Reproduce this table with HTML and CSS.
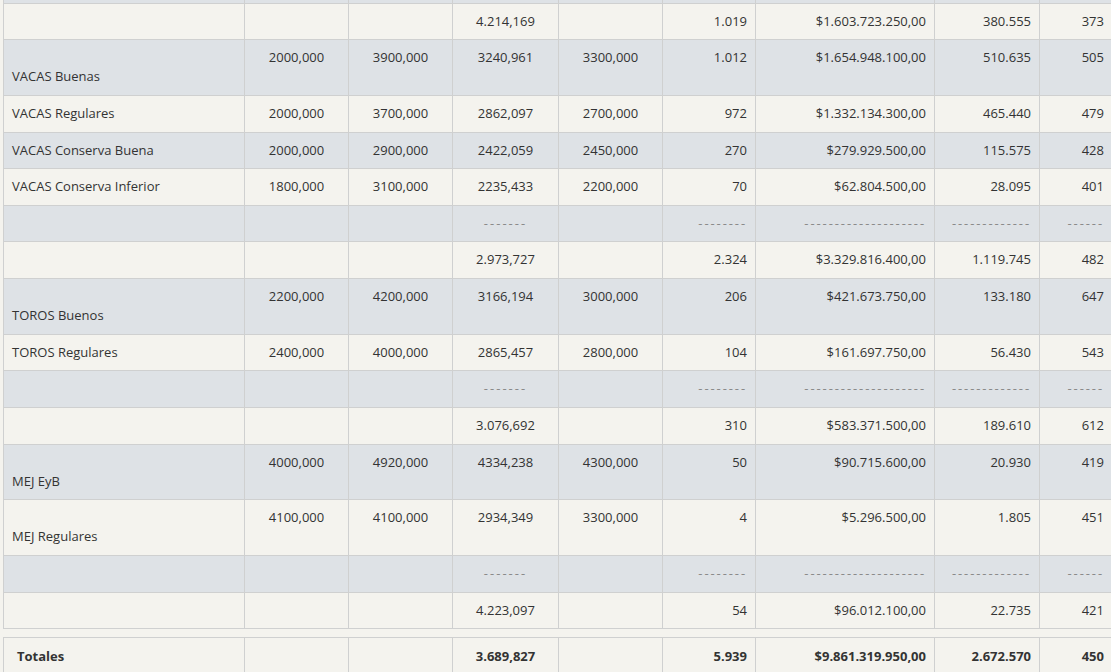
FILE: index.html
```html
<!DOCTYPE html>
<html lang="es">
<head>
<meta charset="utf-8">
<title>Totales</title>
<link rel="stylesheet" href="styles.css">
</head>
<body>
<div class="page">
  <table class="grid main">
    <colgroup>
      <col class="c1"><col class="c2"><col class="c3"><col class="c4"><col class="c5"><col class="c6"><col class="c7"><col class="c8"><col class="c9">
    </colgroup>
    <tbody>
      <tr class="alt"><td>&nbsp;</td><td></td><td></td><td></td><td></td><td></td><td></td><td></td><td></td></tr>
      <tr><td></td><td></td><td></td><td>4.214,169</td><td></td><td>1.019</td><td>$1.603.723.250,00</td><td>380.555</td><td>373</td></tr>
      <tr class="alt"><td><br>VACAS Buenas</td><td>2000,000</td><td>3900,000</td><td>3240,961</td><td>3300,000</td><td>1.012</td><td>$1.654.948.100,00</td><td>510.635</td><td>505</td></tr>
      <tr><td>VACAS Regulares</td><td>2000,000</td><td>3700,000</td><td>2862,097</td><td>2700,000</td><td>972</td><td>$1.332.134.300,00</td><td>465.440</td><td>479</td></tr>
      <tr class="alt"><td>VACAS Conserva Buena</td><td>2000,000</td><td>2900,000</td><td>2422,059</td><td>2450,000</td><td>270</td><td>$279.929.500,00</td><td>115.575</td><td>428</td></tr>
      <tr><td>VACAS Conserva Inferior</td><td>1800,000</td><td>3100,000</td><td>2235,433</td><td>2200,000</td><td>70</td><td>$62.804.500,00</td><td>28.095</td><td>401</td></tr>
      <tr class="alt sep"><td>&nbsp;</td><td></td><td></td><td>-------</td><td></td><td>--------</td><td>--------------------</td><td>-------------</td><td>------</td></tr>
      <tr><td></td><td></td><td></td><td>2.973,727</td><td></td><td>2.324</td><td>$3.329.816.400,00</td><td>1.119.745</td><td>482</td></tr>
      <tr class="alt"><td><br>TOROS Buenos</td><td>2200,000</td><td>4200,000</td><td>3166,194</td><td>3000,000</td><td>206</td><td>$421.673.750,00</td><td>133.180</td><td>647</td></tr>
      <tr><td>TOROS Regulares</td><td>2400,000</td><td>4000,000</td><td>2865,457</td><td>2800,000</td><td>104</td><td>$161.697.750,00</td><td>56.430</td><td>543</td></tr>
      <tr class="alt sep"><td>&nbsp;</td><td></td><td></td><td>-------</td><td></td><td>--------</td><td>--------------------</td><td>-------------</td><td>------</td></tr>
      <tr><td></td><td></td><td></td><td>3.076,692</td><td></td><td>310</td><td>$583.371.500,00</td><td>189.610</td><td>612</td></tr>
      <tr class="alt"><td><br>MEJ EyB</td><td>4000,000</td><td>4920,000</td><td>4334,238</td><td>4300,000</td><td>50</td><td>$90.715.600,00</td><td>20.930</td><td>419</td></tr>
      <tr><td><br>MEJ Regulares</td><td>4100,000</td><td>4100,000</td><td>2934,349</td><td>3300,000</td><td>4</td><td>$5.296.500,00</td><td>1.805</td><td>451</td></tr>
      <tr class="alt sep"><td>&nbsp;</td><td></td><td></td><td>-------</td><td></td><td>--------</td><td>--------------------</td><td>-------------</td><td>------</td></tr>
      <tr><td>&nbsp;</td><td></td><td></td><td>4.223,097</td><td></td><td>54</td><td>$96.012.100,00</td><td>22.735</td><td>421</td></tr>
    </tbody>
  </table>

  <table class="grid totals">
    <colgroup>
      <col class="c1"><col class="c2"><col class="c3"><col class="c4"><col class="c5"><col class="c6"><col class="c7"><col class="c8"><col class="c9">
    </colgroup>
    <tbody>
      <tr><td>Totales</td><td></td><td></td><td>3.689,827</td><td></td><td>5.939</td><td>$9.861.319.950,00</td><td>2.672.570</td><td>450</td></tr>
    </tbody>
  </table>
</div>
</body>
</html>
```

FILE: styles.css
```css
html, body {
  margin: 0;
  padding: 0;
  background: #f4f3ee;
  overflow: hidden;
}

.page {
  padding-left: 3px;
  font-family: "Open Sans", "Liberation Sans", sans-serif;
  font-size: 13px;
  color: #333333;
}

.grid {
  border-collapse: collapse;
  table-layout: fixed;
  width: 1109px;
  background: #f4f3ee;
}

.c1 { width: 241px; }
.c2 { width: 104px; }
.c3 { width: 104px; }
.c4 { width: 106px; }
.c5 { width: 104px; }
.c6 { width: 93px; }
.c7 { width: 179px; }
.c8 { width: 105px; }
.c9 { width: 73px; }

.grid td {
  border: 1px solid #cfd0d0;
  padding: 8px 8px 8.65px;
  line-height: 19px;
  vertical-align: top;
  white-space: nowrap;
  overflow: hidden;
}

.grid td:nth-child(1) { text-align: left; }
.grid td:nth-child(2),
.grid td:nth-child(3),
.grid td:nth-child(4),
.grid td:nth-child(5) { text-align: center; }
.grid td:nth-child(n+6) { text-align: right; }

.grid tr.alt td { background: #dee2e6; }

.main { margin-top: -34px; }

.sep td {
  color: #8a8a8a;
  letter-spacing: 2px;
}
.sep td:nth-child(n+6) { letter-spacing: 1.9px; }

.totals {
  margin-top: 8px;
  font-weight: 700;
}
.totals td {
  padding-top: 9px;
  padding-bottom: 9px;
}
.totals td:first-child { padding-left: 13px; }
```
